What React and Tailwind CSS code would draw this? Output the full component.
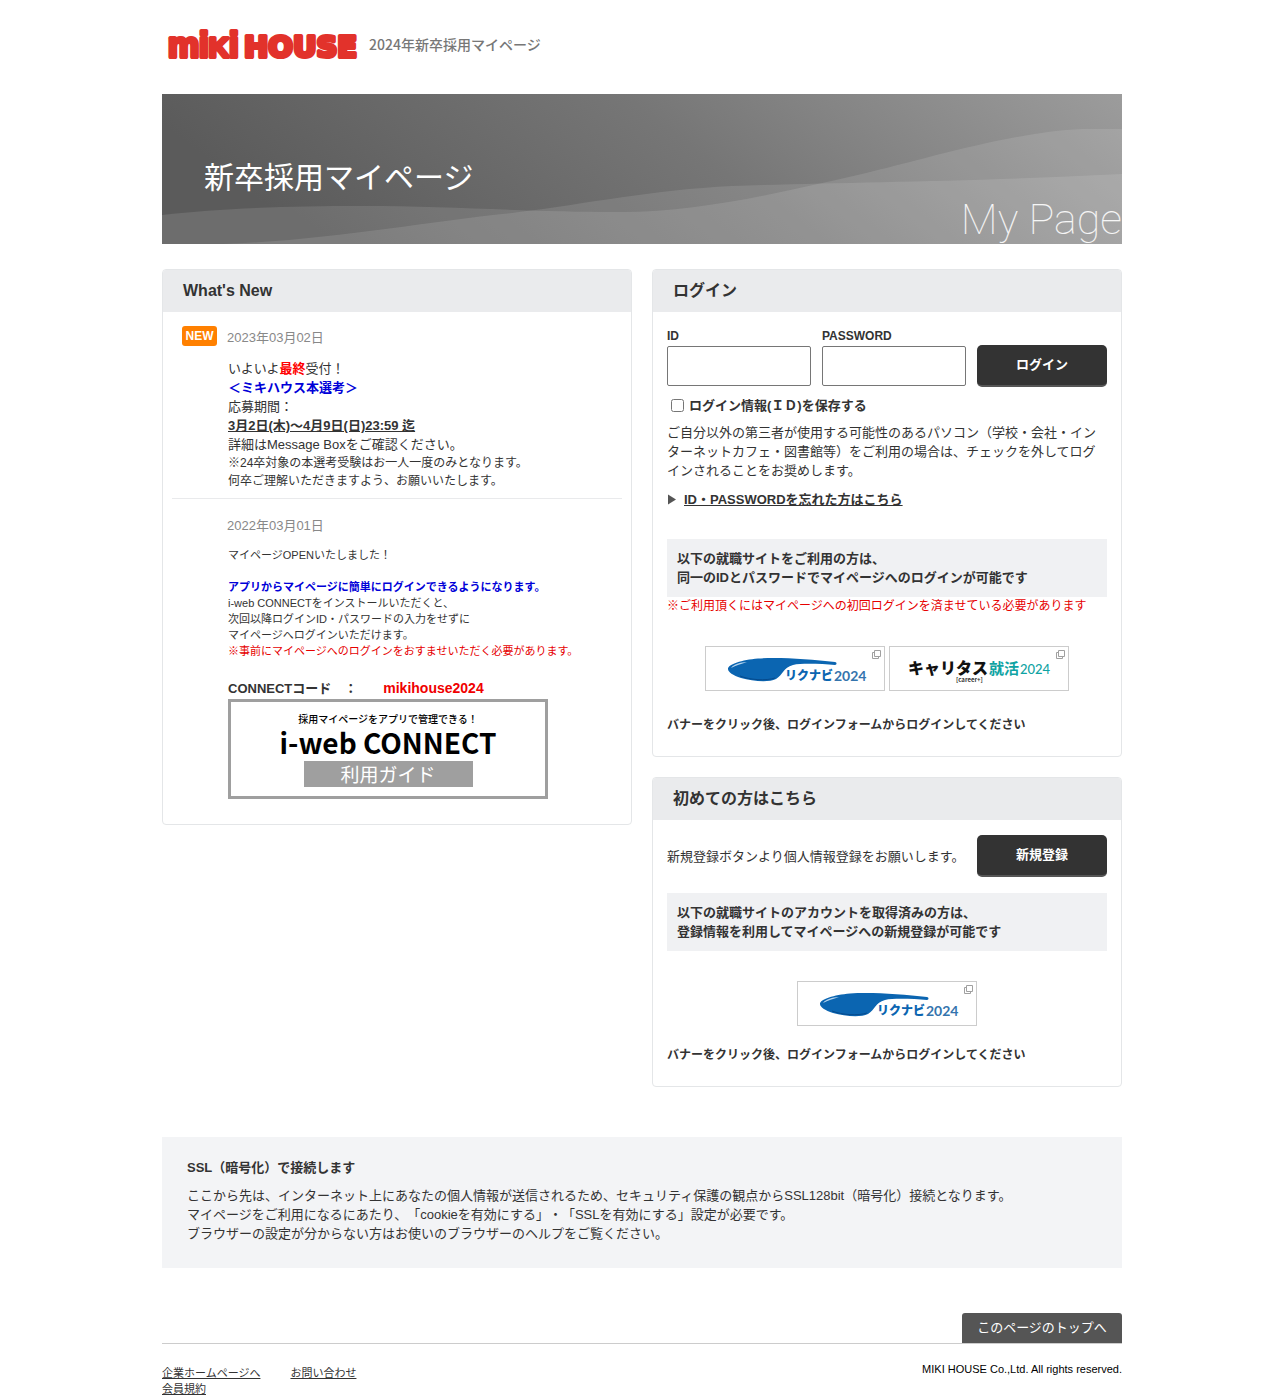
import React from "react";

function Panel({ title, children }) {
  return (
    <section className="overflow-hidden rounded border border-[#e4e6e8] bg-white">
      <h2 className="bg-[#eaebed] px-5 py-[9px] text-base leading-6 font-bold">{title}</h2>
      {children}
    </section>
  );
}

function WindowIcon() {
  return (
    <svg className="absolute top-[3px] right-[3px] h-[9px] w-[9px]" viewBox="0 0 9 9" fill="none" stroke="#a0a0a0">
      <path d="M2.5 .5h6v6h-6z" />
      <path d="M2.5 2.5h-2v6h6v-2" />
    </svg>
  );
}

function BannerLink({ label, children }) {
  return (
    <a href="#" aria-label={label} className="relative block h-[45px] w-[180px] border border-[#ccc] bg-white">
      {children}
      <WindowIcon />
    </a>
  );
}

function RikunabiBanner() {
  return (
    <BannerLink label="リクナビ2024">
      <svg className="block h-[43px] w-[178px]" viewBox="0 0 178 43">
        <path
          d="M22 22C22 17 36 13 52 11.5C72 10 104 12 129 15C131 15.500 131 17.500 129 18C116 17 96 16 87 18C77 20.500 77 28 70 32C62 36 46 34 35 31C27 28.500 22 25 22 22Z"
          fill="#0b65b1"
        />
        <path d="M25 21C28 17 34 15.500 41 15C35 17 30 18.500 25 21Z" fill="#b5d4ee" />
        <path d="M34 29C44 33 60 34 69 31" fill="none" stroke="#064a8c" strokeWidth="1" />
        <text x="79" y="33" fontSize="12" fontWeight="900" fill="#0b65b1" fontFamily="Noto Sans CJK JP, sans-serif">
          リクナビ
        </text>
        <text x="128" y="34" fontSize="14" fontWeight="700" fill="#3474ad" fontFamily="Lato, sans-serif">
          2024
        </text>
      </svg>
    </BannerLink>
  );
}

function CareertasuBanner() {
  return (
    <BannerLink label="キャリタス就活2024">
      <svg className="block h-[43px] w-[178px]" viewBox="0 0 178 43" fontFamily="Noto Sans CJK JP, sans-serif">
        <text x="18" y="27" fontSize="16" fontWeight="900" fill="#111">
          キャリタス
        </text>
        <text x="99" y="27" fontSize="15" fontWeight="700" fill="#0fa3a3">
          就活
        </text>
        <text x="130" y="27" fontSize="13" fontWeight="500" fill="#0fa3a3" fontFamily="Lato, sans-serif">
          2024
        </text>
        <text x="66" y="35" fontSize="6" fontWeight="700" fill="#333">
          [career+]
        </text>
      </svg>
    </BannerLink>
  );
}

function Header() {
  return (
    <header className="flex h-[94px] items-start pt-5 pl-1">
      <a href="#" aria-label="MIKI HOUSE">
        <svg
          className="block h-[44px] w-[194px]"
          viewBox="0 0 194 44"
          fill="#e2322b"
          stroke="#e2322b"
          strokeLinejoin="round"
          fontWeight="700"
        >
          <text x="2" y="37" fontSize="35" strokeWidth="4" fontFamily="Liberation Sans, sans-serif">
            mi<tspan fontSize="28">K</tspan>i
          </text>
          <text x="78" y="37" fontSize="29" strokeWidth="4" fontFamily="DejaVu Sans, sans-serif">
            HOUSE
          </text>
        </svg>
      </a>
      <p className="pt-3 pl-[9px] font-['Noto_Sans_CJK_JP',sans-serif] text-sm leading-6 font-medium text-[#777]">
        2024年新卒採用マイページ
      </p>
    </header>
  );
}

function Hero() {
  return (
    <div className="relative h-[150px] overflow-hidden">
      <svg className="absolute inset-0 h-full w-full" viewBox="0 0 960 150" preserveAspectRatio="none">
        <defs>
          <linearGradient id="sky" x1="0" y1=".2" x2="1" y2="0">
            <stop offset="0" stopColor="#5b5b5b" />
            <stop offset=".5" stopColor="#767676" />
            <stop offset="1" stopColor="#9c9c9c" />
          </linearGradient>
        </defs>
        <rect width="960" height="150" fill="url(#sky)" />
        <path
          d="M0 121C60 114 130 112 200 112C290 112 360 118 460 118C540 118 620 98 700 80C760 66 850 38 920 35H960V150H0Z"
          fill="#fff"
          fillOpacity=".11"
        />
        <path
          d="M60 150C170 146 260 128 350 119C430 109 490 96 570 92C680 88 800 88 960 80V150Z"
          fill="#fff"
          fillOpacity=".11"
        />
      </svg>
      <h1 className="relative pt-[59px] pl-[42px] font-['Noto_Sans_CJK_JP',sans-serif] text-[30px] leading-[44px] font-normal text-white">
        新卒採用マイページ
      </h1>
      <p className="absolute right-0 bottom-0 font-['Roboto',sans-serif] text-[43px] leading-[50px] font-thin text-white/90">
        My Page
      </p>
    </div>
  );
}

function NewsDate({ children, isNew }) {
  return (
    <div className="flex items-start">
      <div className="w-[45px]">
        {isNew && (
          <span className="block h-5 w-[35px] rounded-[3px] bg-[#ff8000] text-center text-xs leading-5 font-bold text-white">
            NEW
          </span>
        )}
      </div>
      <time className="pt-[2px] text-[#888]">{children}</time>
    </div>
  );
}

function WhatsNew() {
  return (
    <Panel title="What's New">
      <div className="px-[9px] pb-[25px]">
        <article className="border-b border-[#e9eaec] px-2.5 pt-3.5 pb-2">
          <NewsDate isNew>2023年03月02日</NewsDate>
          <div className="pt-3 pl-[46px]">
            <p>
              いよいよ<b className="text-[#f00]">最終</b>受付！
            </p>
            <p className="font-bold text-[#0000d8]">＜ミキハウス本選考＞</p>
            <p>応募期間：</p>
            <p className="font-bold underline">3月2日(木)～4月9日(日)23:59 迄</p>
            <p>詳細はMessage Boxをご確認ください。</p>
            <p className="text-xs leading-[18px]">※24卒対象の本選考受験はお一人一度のみとなります。</p>
            <p className="text-xs leading-[18px]">何卒ご理解いただきますよう、お願いいたします。</p>
          </div>
        </article>
        <article className="px-2.5 pt-[15px]">
          <NewsDate>2022年03月01日</NewsDate>
          <div className="pt-3 pl-[46px] text-[11px] leading-4">
            <p className="pb-4">マイページOPENいたしました！</p>
            <p className="font-bold text-[#0000d8]">アプリからマイページに簡単にログインできるようになります。</p>
            <p>i-web CONNECTをインストールいただくと、</p>
            <p>次回以降ログインID・パスワードの入力をせずに</p>
            <p>マイページへログインいただけます。</p>
            <p className="text-[#e60000]">※事前にマイページへのログインをおすませいただく必要があります。</p>
            <p className="pt-[19px] text-[13px] leading-5 font-bold">
              CONNECTコード　：　　<span className="text-sm leading-5 text-[#f00000]">mikihouse2024</span>
            </p>
            <a
              href="#"
              className="flex h-[100px] w-[320px] flex-col items-center border-[3px] border-[#9f9f9f] bg-white font-['Noto_Sans_CJK_JP',sans-serif]"
            >
              <span className="pt-2.5 text-[10px] leading-[14px] font-medium text-black">採用マイページをアプリで管理できる！</span>
              <span className="text-[28px] leading-8 font-bold text-black">i-web CONNECT</span>
              <span className="mt-[3px] w-[169px] bg-[#9f9f9f] text-center text-[19px] leading-[26px] text-white">
                利用ガイド
              </span>
            </a>
          </div>
        </article>
      </div>
    </Panel>
  );
}

const buttonClass =
  "h-[42px] w-[130px] shrink-0 rounded-[5px] border-b-2 border-[#555] bg-[#333] pb-px text-center text-[13px] leading-[19px] font-bold text-white";

function Field({ id, label, type }) {
  return (
    <div className="flex-1">
      <label htmlFor={id} className="block text-xs leading-[18px] font-bold">
        {label}
      </label>
      <input id={id} type={type} className="mt-px block h-10 w-full rounded-[2px] border border-[#767676] bg-white px-2" />
    </div>
  );
}

function Login() {
  return (
    <Panel title="ログイン">
      <div className="px-3.5 pt-[15px] pb-[22px]">
        <form onSubmit={(e) => e.preventDefault()}>
          <div className="flex items-start gap-[11px]">
            <Field id="login-id" label="ID" type="text" />
            <Field id="login-password" label="PASSWORD" type="password" />
            <div className="pt-[18px]">
              <button type="submit" className={buttonClass}>
                ログイン
              </button>
            </div>
          </div>
          <div className="flex items-center gap-[5px] pt-[9px] pl-1">
            <input id="save-id" type="checkbox" className="h-[13px] w-[13px]" />
            <label htmlFor="save-id" className="font-bold">
              ログイン情報(ＩＤ)を保存する
            </label>
          </div>
        </form>
        <p className="pt-2">
          ご自分以外の第三者が使用する可能性のあるパソコン（学校・会社・インターネットカフェ・図書館等）をご利用の場合は、チェックを外してログインされることをお奨めします。
        </p>
        <p className="flex items-center gap-2 pt-2.5">
          <svg className="h-[11px] w-[9px]" viewBox="0 0 9 11" fill="#555">
            <path d="M1 .5 9 5.500 1 10.500Z" />
          </svg>
          <a href="#" className="font-bold underline">
            ID・PASSWORDを忘れた方はこちら
          </a>
        </p>
        <p className="mt-[30px] bg-[#f0f1f3] p-2.5 font-bold">
          以下の就職サイトをご利用の方は、
          <br />
          同一のIDとパスワードでマイページへのログインが可能です
        </p>
        <p className="text-xs leading-[18px] text-[#e60000]">※ご利用頂くにはマイページへの初回ログインを済ませている必要があります</p>
        <div className="flex justify-center gap-1 pt-[31px]">
          <RikunabiBanner />
          <CareertasuBanner />
        </div>
        <p className="pt-[25px] text-xs leading-[18px] font-bold">バナーをクリック後、ログインフォームからログインしてください</p>
      </div>
    </Panel>
  );
}

function Register() {
  return (
    <Panel title="初めての方はこちら">
      <div className="px-3.5 pt-[15px] pb-[22px]">
        <div className="flex items-center justify-between">
          <p>新規登録ボタンより個人情報登録をお願いします。</p>
          <button type="button" className={buttonClass}>
            新規登録
          </button>
        </div>
        <p className="mt-4 bg-[#f0f1f3] p-2.5 font-bold">
          以下の就職サイトのアカウントを取得済みの方は、
          <br />
          登録情報を利用してマイページへの新規登録が可能です
        </p>
        <div className="flex justify-center pt-[30px]">
          <RikunabiBanner />
        </div>
        <p className="pt-5 text-xs leading-[18px] font-bold">バナーをクリック後、ログインフォームからログインしてください</p>
      </div>
    </Panel>
  );
}

export default function App() {
  return (
    <div className="bg-white font-['Liberation_Sans','Noto_Sans_CJK_JP',sans-serif] text-[13px] leading-[19px] text-[#333] [text-spacing-trim:space-all]">
      <div className="mx-auto max-w-[960px]">
        <Header />
        <Hero />
        <main className="grid grid-cols-2 items-start gap-5 pt-[25px]">
          <WhatsNew />
          <div className="flex flex-col gap-5">
            <Login />
            <Register />
          </div>
        </main>
        <section className="mt-[50px] bg-[#f3f4f6] px-[25px] pt-[21px] pb-[25px]">
          <h2 className="pb-[9px] font-bold">SSL（暗号化）で接続します</h2>
          <p>ここから先は、インターネット上にあなたの個人情報が送信されるため、セキュリティ保護の観点からSSL128bit（暗号化）接続となります。</p>
          <p>マイページをご利用になるにあたり、「cookieを有効にする」・「SSLを有効にする」設定が必要です。</p>
          <p>ブラウザーの設定が分からない方はお使いのブラウザーのヘルプをご覧ください。</p>
        </section>
        <footer className="pt-[45px]">
          <div className="flex justify-end border-b border-[#ccc]">
            <a href="#" className="block w-40 rounded-t-[3px] bg-[#555] text-center leading-[30px] text-white">
              このページのトップへ
            </a>
          </div>
          <div className="flex items-start justify-between text-[11px] leading-4">
            <nav className="pt-[21px]">
              <div className="flex gap-[30px]">
                <a href="#" className="underline">企業ホームページへ</a>
                <a href="#" className="underline">お問い合わせ</a>
              </div>
              <a href="#" className="block w-fit underline">会員規約</a>
            </nav>
            <p className="pt-[17px] text-black">MIKI HOUSE Co.,Ltd. All rights reserved.</p>
          </div>
        </footer>
      </div>
    </div>
  );
}
